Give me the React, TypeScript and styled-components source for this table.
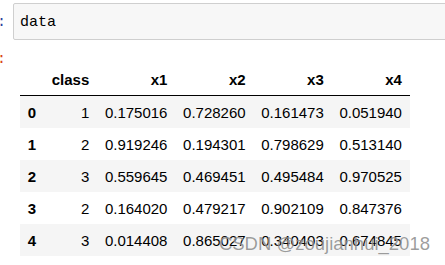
import React from "react";
import styled, { createGlobalStyle } from "styled-components";

const rows = [
	{ i: 0, c: 1, x: ["0.175016", "0.728260", "0.161473", "0.051940"] },
	{ i: 1, c: 2, x: ["0.919246", "0.194301", "0.798629", "0.513140"] },
	{ i: 2, c: 3, x: ["0.559645", "0.469451", "0.495484", "0.970525"] },
	{ i: 3, c: 2, x: ["0.164020", "0.479217", "0.902109", "0.847376"] },
	{ i: 4, c: 3, x: ["0.014408", "0.865027", "0.340403", "0.674845"] },
];

const App = () => {
	return (
		<Page>
			<GlobalStyle />
			<InputRow>
				<Prompt color="#303f9f">:</Prompt>
				<InputBox>data</InputBox>
			</InputRow>
			<OutputRow>
				<Prompt color="#d84315">:</Prompt>
				<Frame>
					<thead>
						<tr>
							<Head />
							<Head>class</Head>
							<Head>x1</Head>
							<Head>x2</Head>
							<Head>x3</Head>
							<Head>x4</Head>
						</tr>
					</thead>
					<tbody>
						{rows.map((r) => (
							<Row key={r.i}>
								<Index>{r.i}</Index>
								<Cell>{r.c}</Cell>
								{r.x.map((v, k) => (
									<Cell key={k}>{v}</Cell>
								))}
							</Row>
						))}
					</tbody>
				</Frame>
			</OutputRow>
			<Watermark>CSDN @zoujianhui_2018</Watermark>
		</Page>
	);
};

export default App;

const GlobalStyle = createGlobalStyle`
	body {
		margin: 0;
		background: #fff;
		overflow: hidden;
	}
`;

const Page = styled.div`
	position: relative;
	width: 445px;
	height: 265px;
	overflow: hidden;
`;

const InputRow = styled.div`
	display: flex;
	padding-top: 3px;
`;

const Prompt = styled.div<{ color: string }>`
	width: 13px;
	flex: none;
	color: ${(p) => p.color};
	font-family: "Liberation Mono", monospace;
	font-size: 15px;
	line-height: 17px;
	padding-top: 11px;
	text-indent: -3px;
`;

const InputBox = styled.div`
	flex: 1;
	margin-right: -20px;
	height: 37px;
	box-sizing: border-box;
	border: 1px solid #cfcfcf;
	border-radius: 2px;
	background: #f7f7f7;
	padding: 10px 6px 0;
	font-family: "Liberation Mono", monospace;
	font-size: 15px;
	line-height: 17px;
	color: #000;
`;

const OutputRow = styled.div`
	display: flex;
	margin-top: 3px;

	${Prompt} {
		padding-top: 8px;
	}
`;

const Frame = styled.table`
	margin-top: 21px;
	margin-left: 7px;
	border-collapse: collapse;
	border-spacing: 0;
	font-family: "Liberation Sans", Arial, sans-serif;
	font-size: 15px;
	color: #000;
`;

const Head = styled.th`
	height: 31px;
	padding: 0 7.8px;
	text-align: right;
	font-weight: bold;
	vertical-align: middle;
	border-bottom: 1px solid #000;
`;

const Row = styled.tr`
	&:nth-child(odd) {
		background: #f5f5f5;
	}
`;

const Index = styled.th`
	height: 32px;
	padding: 0 7.8px;
	text-align: left;
	font-weight: bold;
	vertical-align: middle;
`;

const Cell = styled.td`
	height: 32px;
	padding: 0 7.8px;
	text-align: right;
	vertical-align: middle;
`;

const Watermark = styled.div`
	position: absolute;
	right: 15px;
	top: 233px;
	font-family: "Liberation Sans", Arial, sans-serif;
	font-size: 18.5px;
	line-height: 22px;
	color: rgba(90, 90, 90, 0.6);
	text-shadow: 0 0 1px rgba(255, 255, 255, 0.7);
	pointer-events: none;
`;
